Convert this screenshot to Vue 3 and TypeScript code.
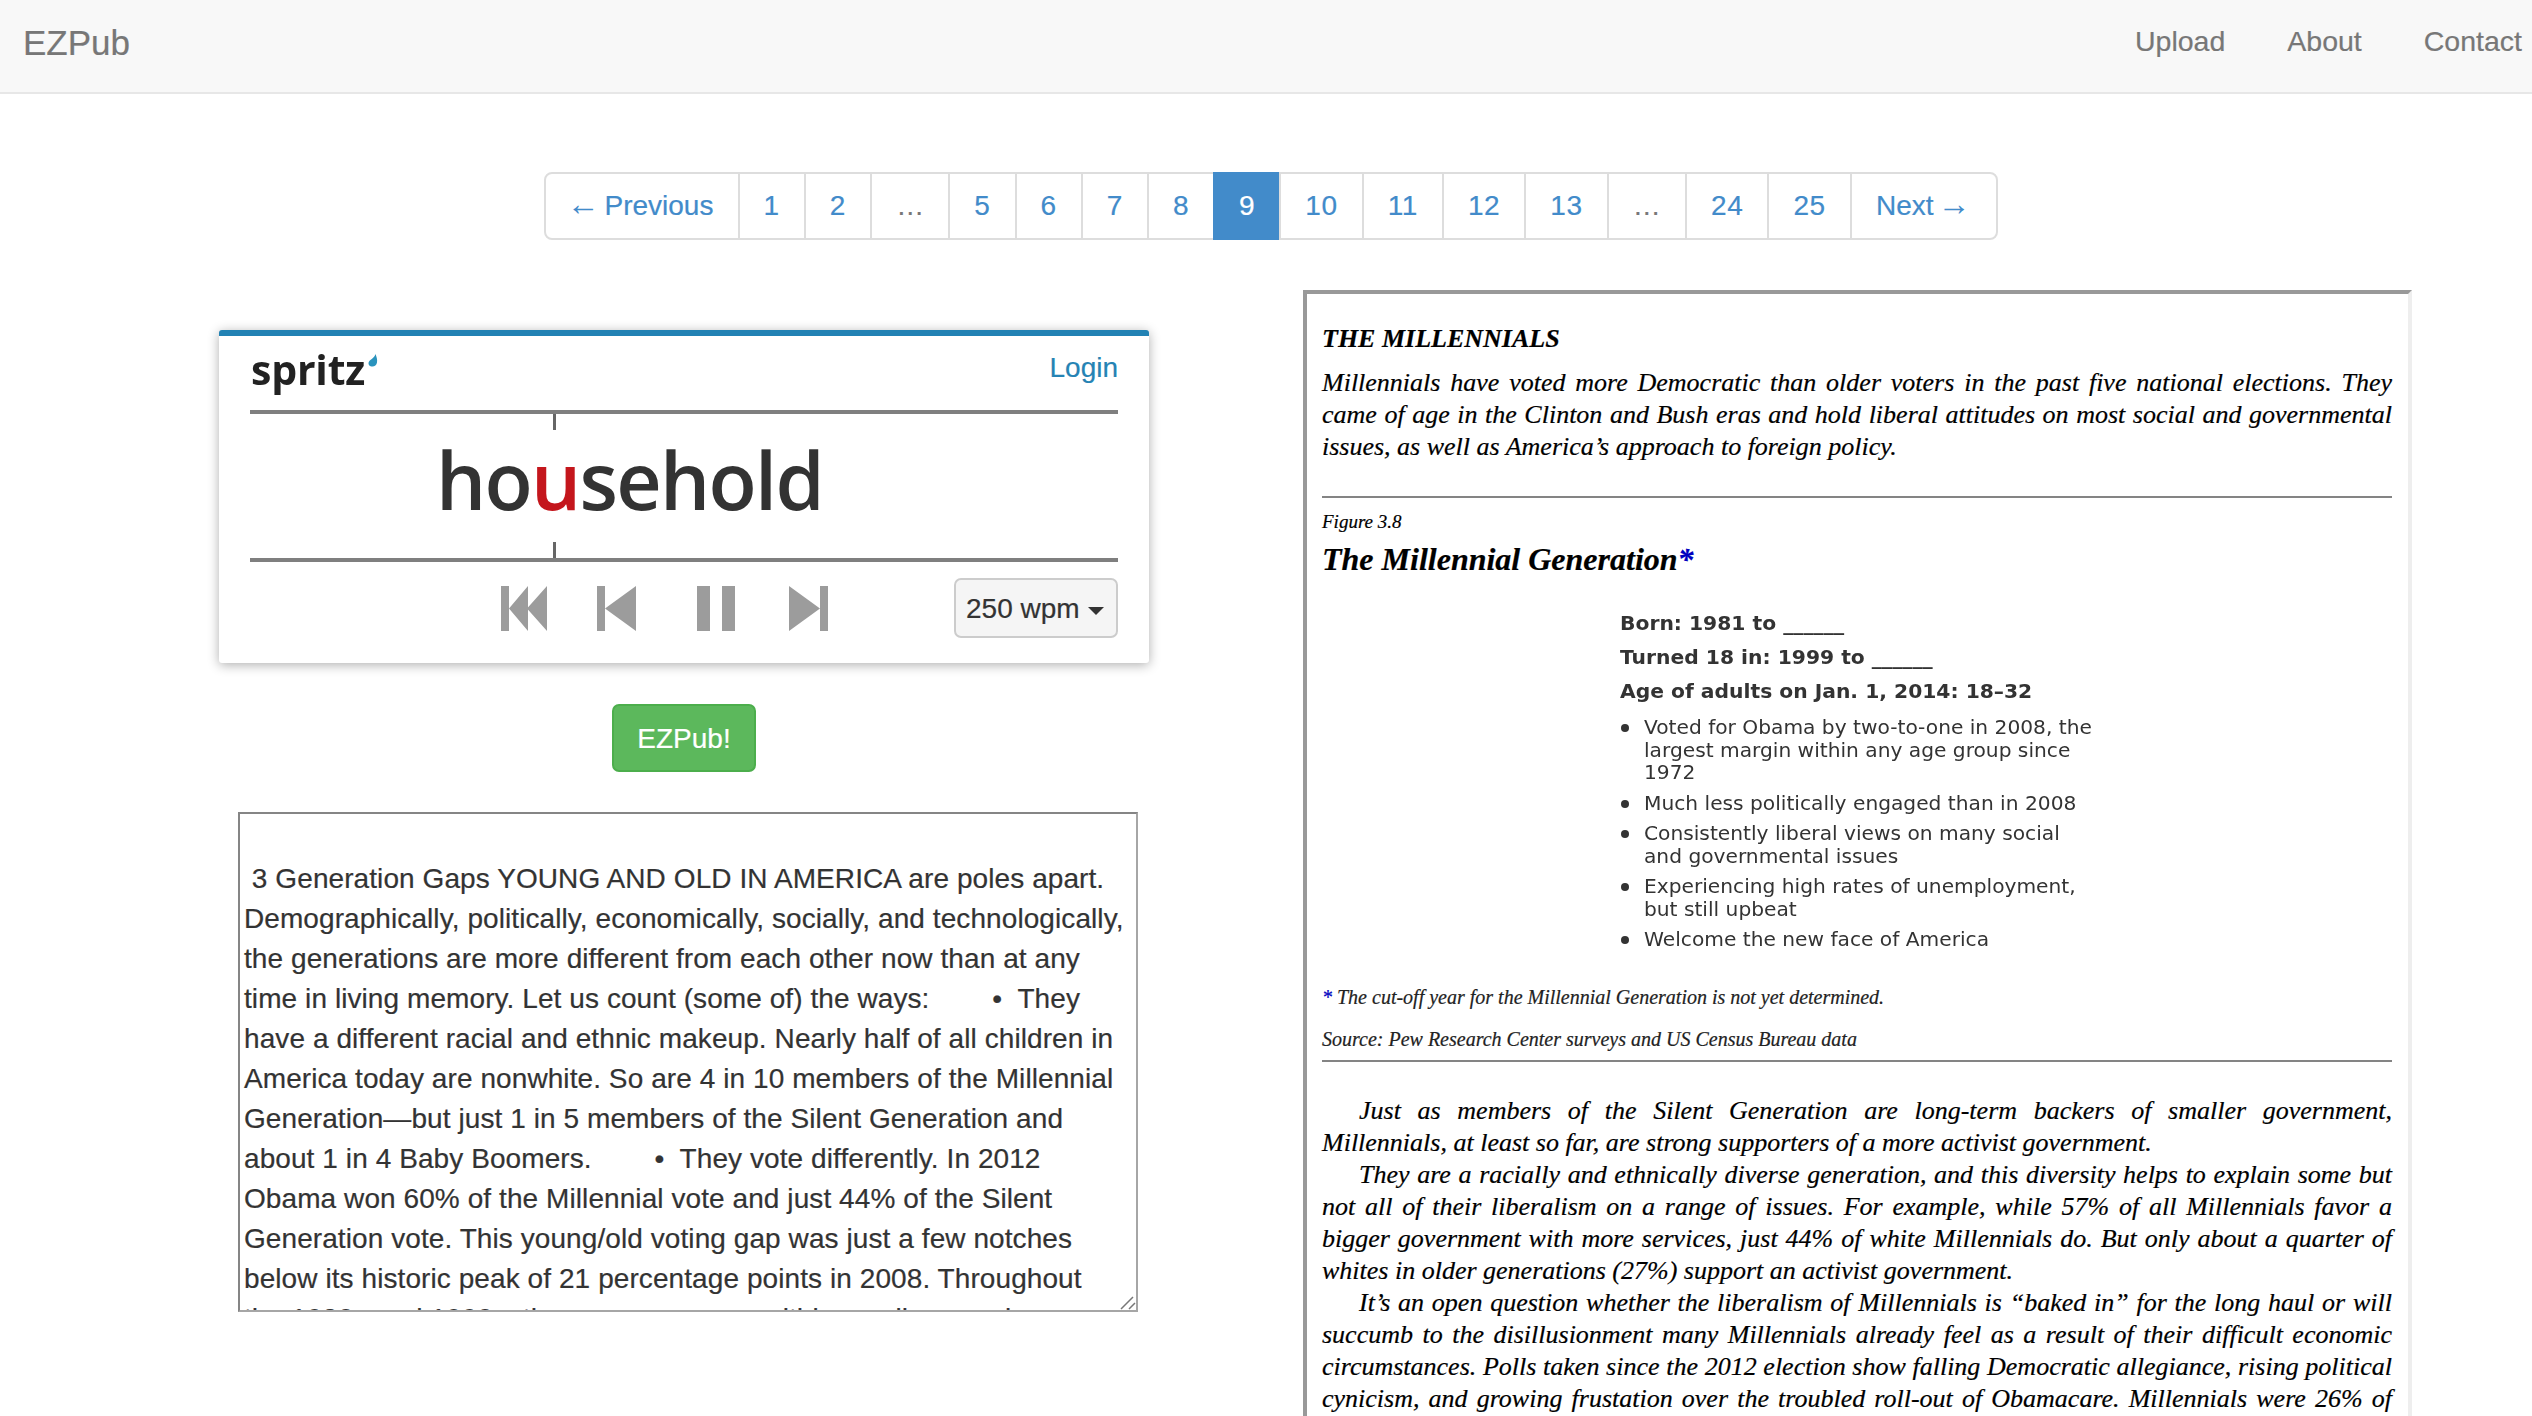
<script setup lang="ts">
interface PageItem { label: string; kind: 'link' | 'active' | 'gap' | 'prev' | 'next' }
interface TextLine { text: string; indent?: boolean; end?: boolean }

const nums = (list: number[]): PageItem[] => list.map((n) => ({ label: String(n), kind: n === 9 ? 'active' : 'link' }))
const pages: PageItem[] = [
  { label: 'Previous', kind: 'prev' },
  ...nums([1, 2]),
  { label: '…', kind: 'gap' },
  ...nums([5, 6, 7, 8, 9, 10, 11, 12, 13]),
  { label: '…', kind: 'gap' },
  ...nums([24, 25]),
  { label: 'Next', kind: 'next' },
]

const sourceText = `
 3 Generation Gaps YOUNG AND OLD IN AMERICA are poles apart.
Demographically, politically, economically, socially, and technologically,
the generations are more different from each other now than at any
time in living memory. Let us count (some of) the ways:        •  They
have a different racial and ethnic makeup. Nearly half of all children in
America today are nonwhite. So are 4 in 10 members of the Millennial
Generation—but just 1 in 5 members of the Silent Generation and
about 1 in 4 Baby Boomers.        •  They vote differently. In 2012
Obama won 60% of the Millennial vote and just 44% of the Silent
Generation vote. This young/old voting gap was just a few notches
below its historic peak of 21 percentage points in 2008. Throughout
the 1980s and 1990s, the age gaps were within smaller margins, points. A`

const intro: TextLine[] = [
  { text: 'Millennials have voted more Democratic than older voters in the past five national elections. They' },
  { text: 'came of age in the Clinton and Bush eras and hold liberal attitudes on most social and governmental' },
  { text: 'issues, as well as America’s approach to foreign policy.', end: true },
]

const facts = ['Born: 1981 to ______', 'Turned 18 in: 1999 to ______', 'Age of adults on Jan. 1, 2014: 18–32']

const bullets: string[][] = [
  ['Voted for Obama by two-to-one in 2008, the', 'largest margin within any age group since', '1972'],
  ['Much less politically engaged than in 2008'],
  ['Consistently liberal views on many social', 'and governmental issues'],
  ['Experiencing high rates of unemployment,', 'but still upbeat'],
  ['Welcome the new face of America'],
]

const body: TextLine[] = [
  { text: 'Just as members of the Silent Generation are long-term backers of smaller government,', indent: true },
  { text: 'Millennials, at least so far, are strong supporters of a more activist government.', end: true },
  { text: 'They are a racially and ethnically diverse generation, and this diversity helps to explain some but', indent: true },
  { text: 'not all of their liberalism on a range of issues. For example, while 57% of all Millennials favor a' },
  { text: 'bigger government with more services, just 44% of white Millennials do. But only about a quarter of' },
  { text: 'whites in older generations (27%) support an activist government.', end: true },
  { text: 'It’s an open question whether the liberalism of Millennials is “baked in” for the long haul or will', indent: true },
  { text: 'succumb to the disillusionment many Millennials already feel as a result of their difficult economic' },
  { text: 'circumstances. Polls taken since the 2012 election show falling Democratic allegiance, rising political' },
  { text: 'cynicism, and growing frustation over the troubled roll-out of Obamacare. Millennials were 26% of' },
]
</script>

<template>
  <div class="page">
    <header class="navbar">
      <a class="brand">EZPub</a>
      <nav class="nav-links">
        <a>Upload</a>
        <a>About</a>
        <a>Contact</a>
      </nav>
    </header>

    <div class="pager-row">
      <ul class="pager">
        <li v-for="(p, i) in pages" :key="i" :class="p.kind">
          <span v-if="p.kind === 'prev'" class="arrow arrow-l">←</span>{{ p.label }}<span v-if="p.kind === 'next'" class="arrow arrow-r">→</span>
        </li>
      </ul>
    </div>

    <main class="content">
      <section class="left">
        <div class="spritz">
          <div class="spritz-head">
            <div class="logo">
              <span class="logo-text">spritz</span>
              <svg class="drop" viewBox="0 0 10 13" width="10" height="13">
                <path d="M7.5 0C8.6 3 9.5 5.5 9 8.5 8.5 11.5 6 13 3.5 12.5 1 12 .2 10 .6 8.5 1.5 5.5 6 5 7.5 0Z" fill="#2a93bd" />
              </svg>
            </div>
            <a class="login">Login</a>
          </div>
          <div class="reader">
            <span class="tick tick-top"></span>
            <div class="word">ho<span class="pivot">u</span>sehold</div>
            <span class="tick tick-bottom"></span>
          </div>
          <div class="controls">
            <svg class="ctl first" viewBox="0 0 46 45" width="46" height="45">
              <path d="M0 0H8V45H0ZM8 22.5 27 0V45ZM26 22.5 46 0V45Z" />
            </svg>
            <svg class="ctl back" viewBox="0 0 39 45" width="39" height="45">
              <path d="M0 0H8V45H0ZM8 22.5 39 0V45Z" />
            </svg>
            <svg class="ctl pause" viewBox="0 0 38 45" width="38" height="45">
              <path d="M0 0H13V45H0ZM25 0H38V45H25Z" />
            </svg>
            <svg class="ctl next" viewBox="0 0 39 45" width="39" height="45">
              <path d="M0 0 31 22.5V0H39V45H31V22.5L0 45Z" />
            </svg>
            <button class="wpm" type="button">250 wpm<span class="caret"></span></button>
          </div>
        </div>

        <button class="go" type="button">EZPub!</button>

        <div class="source-wrap">
          <textarea class="source" readonly>{{ sourceText }}</textarea>
          <svg class="grip" viewBox="0 0 16 14" width="16" height="14">
            <path d="M1 13 13 1M9 13 15 7" stroke="#777" stroke-width="1.5" fill="none" />
          </svg>
        </div>
      </section>

      <article class="scan">
        <h2 class="scan-title">THE MILLENNIALS</h2>
        <div class="intro">
          <span v-for="(l, i) in intro" :key="i" class="line" :class="{ end: l.end }">{{ l.text }}</span>
        </div>
        <hr class="rule rule-a" />
        <div class="fig-no">Figure 3.8</div>
        <h3 class="fig-title">The Millennial Generation<span class="star">*</span></h3>
        <div class="figure">
          <p v-for="f in facts" :key="f" class="fact">{{ f }}</p>
          <ul class="bullets">
            <li v-for="(b, i) in bullets" :key="i">
              <div>
                <span v-for="t in b" :key="t" class="bullet-line">{{ t }}</span>
              </div>
            </li>
          </ul>
        </div>
        <p class="foot"><span class="star">*</span> The cut-off year for the Millennial Generation is not yet determined.</p>
        <p class="source-note">Source: Pew Research Center surveys and US Census Bureau data</p>
        <hr class="rule rule-b" />
        <div class="body">
          <span
            v-for="(l, i) in body"
            :key="i"
            class="line"
            :class="{ end: l.end, indent: l.indent }"
          >{{ l.text }}</span>
        </div>
      </article>
    </main>
  </div>
</template>

<style>
html, body {
  margin: 0;
  background: #fff;
  overflow: hidden;
}
</style>

<style scoped>
.page {
  width: 2532px;
  height: 1416px;
  overflow: hidden;
  font-family: "Liberation Sans", Arial, sans-serif;
  font-size: 28px;
  line-height: 40px;
  color: #333;
  -webkit-text-stroke: 0.2px;
}

.navbar {
  box-sizing: content-box;
  height: 86px;
  display: flex;
  align-items: center;
  justify-content: space-between;
  padding: 0 10px 6px 23px;
  background: #f8f8f8;
  border-bottom: 2px solid #e7e7e7;
  color: #777;
}
.brand { font-size: 35px; }
.nav-links {
  display: flex;
  gap: 62px;
  margin-bottom: 4px;
  font-size: 28.5px;
}

.pager-row {
  display: flex;
  justify-content: center;
  padding: 78px 0 0 10px;
}
.pager {
  display: flex;
  list-style: none;
  margin: 0;
  padding: 0;
}
.pager li {
  padding: 12px 24.2px;
  border: 2px solid #ddd;
  margin-left: -2px;
  color: #428bca;
  background: #fff;
}
.pager li.link,
.pager li.active {
  padding: 12px 24px;
  letter-spacing: 0.6px;
}
.pager li:first-child {
  margin-left: 0;
  border-radius: 8px 0 0 8px;
}
.pager li:last-child { border-radius: 0 8px 8px 0; }
.pager li.gap { color: #777; }
.pager li.active {
  background: #428bca;
  border-color: #428bca;
  color: #fff;
}
.arrow {
  display: inline-block;
  font-size: 33px;
  line-height: 28px;
  -webkit-text-stroke: 0;
}
.arrow-l { width: 38px; margin-left: -4px; }
.arrow-r { width: 34px; margin-left: 4px; }

.content {
  display: flex;
  align-items: flex-start;
  padding: 50px 0 0 219px;
  gap: 154px;
}

.left {
  width: 930px;
  flex: none;
  display: flex;
  flex-direction: column;
  padding-top: 40px;
}

.spritz {
  box-sizing: border-box;
  height: 333px;
  background: #fff;
  border-top: 6px solid #2282b4;
  border-radius: 3px;
  box-shadow: 0 2px 12px rgba(0, 0, 0, 0.32);
  padding: 0 31px;
}
.spritz-head {
  height: 74px;
  display: flex;
  justify-content: space-between;
  align-items: flex-start;
}
.logo {
  display: flex;
  align-items: flex-start;
  padding: 10px 0 0 1px;
  color: #222;
  filter: blur(0.4px);
}
.logo-text {
  font-family: "Open Sans", sans-serif;
  font-weight: 700;
  font-size: 41px;
  line-height: 46px;
  letter-spacing: -0.2px;
  -webkit-text-stroke: 0;
}
.drop { margin: 8px 0 0 3px; }
.login {
  color: #2583b4;
  padding-top: 12px;
}

.reader {
  position: relative;
  height: 144px;
  border-top: 4px solid #7f7f7f;
  border-bottom: 4px solid #7f7f7f;
  display: flex;
  align-items: center;
}
.tick {
  position: absolute;
  left: 303px;
  width: 3px;
  height: 16px;
  background: #666;
}
.tick-top { top: 0; }
.tick-bottom { bottom: 0; }
.word {
  padding: 0 0 12px 186px;
  font-family: "Open Sans", sans-serif;
  font-weight: 600;
  font-size: 79px;
  line-height: 100px;
  letter-spacing: -1.7px;
  color: #333;
  filter: blur(0.4px);
  -webkit-text-stroke: 0;
}
.pivot { color: #c4161c; }

.controls {
  display: flex;
  align-items: center;
  height: 60px;
  margin-top: 16px;
  padding-left: 251px;
}
.ctl { flex: none; fill: #9c9c9c; }
.back { margin-left: 50px; }
.pause { margin-left: 61px; }
.next { margin-left: 54px; }
.wpm {
  box-sizing: border-box;
  margin-left: auto;
  width: 164px;
  height: 60px;
  padding: 2px 0 0 10px;
  display: flex;
  align-items: center;
  background: #f5f5f5;
  border: 2px solid #ccc;
  border-radius: 7px;
  color: #333;
  font: inherit;
}
.caret {
  margin: 4px 0 0 8px;
  border-top: 8px solid #333;
  border-left: 8px solid transparent;
  border-right: 8px solid transparent;
}

.go {
  align-self: center;
  box-sizing: border-box;
  width: 144px;
  height: 68px;
  margin-top: 41px;
  padding: 1px 0 0;
  background: #5cb85c;
  border: 2px solid #4cae4c;
  border-radius: 7px;
  color: #fff;
  font: inherit;
}

.source-wrap {
  position: relative;
  width: 900px;
  height: 500px;
  margin: 40px 0 0 19px;
}
.source {
  display: block;
  box-sizing: border-box;
  width: 900px;
  height: 500px;
  padding: 5px 4px 4px;
  border-width: 2px;
  border-style: solid;
  border-color: #858585 #a6a6a6 #a6a6a6 #858585;
  border-radius: 0;
  outline: none;
  overflow: hidden;
  resize: none;
  background: #fff;
  color: #333;
  font: inherit;
  line-height: 40px;
  letter-spacing: 0.08px;
  -webkit-text-stroke: 0.2px;
}
.grip {
  position: absolute;
  right: 2px;
  bottom: 2px;
}

.scan {
  box-sizing: border-box;
  width: 1109px;
  flex: none;
  margin: 0;
  padding: 29px 16px 80px 15px;
  border-width: 4px;
  border-style: solid;
  border-color: #999 #eee #eee #999;
  font-family: "Liberation Serif", "Times New Roman", serif;
  font-style: italic;
  color: #000;
}
.scan-title {
  margin: 0;
  font-size: 26px;
  line-height: 32px;
  font-weight: 700;
}
.intro {
  margin-top: 12px;
  font-size: 26px;
  line-height: 32px;
}
.line {
  display: block;
  text-align: justify;
  text-align-last: justify;
  white-space: nowrap;
}
.line.end { text-align-last: left; }
.line.indent { padding-left: 37px; }
.rule {
  height: 2px;
  margin: 0;
  border: 0;
  background: #848484;
}
.rule-a { margin-top: 33px; }
.fig-no {
  margin-top: 12px;
  font-size: 19px;
  line-height: 24px;
}
.fig-title {
  margin: 5px 0 0;
  font-size: 32px;
  line-height: 40px;
  font-weight: 700;
}
.star { color: #0000c0; }
.figure {
  margin-top: 27px;
  padding-left: 298px;
  font-family: "DejaVu Sans", sans-serif;
  font-style: normal;
  color: #333;
  filter: blur(0.35px);
}
.fact {
  margin: 0;
  font-size: 20.3px;
  line-height: 34px;
  font-weight: 700;
  -webkit-text-stroke: 0;
}
.bullets {
  list-style: none;
  margin: 8px 0 0;
  padding: 0;
  font-size: 20.2px;
  line-height: 22.5px;
  display: flex;
  flex-direction: column;
  gap: 8px;
  -webkit-text-stroke: 0;
}
.bullets li {
  display: flex;
  gap: 15px;
}
.bullets li::before {
  content: "";
  flex: none;
  width: 8px;
  height: 8px;
  margin: 8px 0 0 1px;
  border-radius: 50%;
  background: #333;
}
.bullet-line { display: block; white-space: nowrap; }
.foot {
  margin: 33px 0 0;
  font-size: 20px;
  line-height: 26px;
  color: #222;
}
.source-note {
  margin: 16px 0 0;
  font-size: 20px;
  line-height: 26px;
  color: #222;
}
.rule-b { margin-top: 8px; }
.body {
  margin-top: 33px;
  font-size: 26px;
  line-height: 32.1px;
}
</style>
